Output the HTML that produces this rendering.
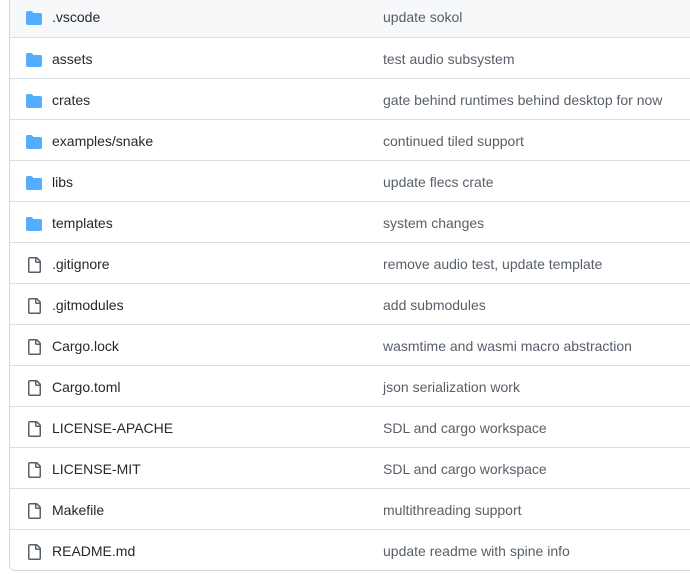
<!DOCTYPE html>
<html><head><meta charset="utf-8"><style>
html,body{margin:0;padding:0;background:#fff;width:690px;height:574px;overflow:hidden}
.box{position:absolute;left:9px;top:-5px;width:720px;height:576px;border:1px solid #d0d7de;border-radius:6px;box-sizing:border-box;overflow:hidden}
.row{position:absolute;left:0;width:100%;height:41px;border-top:1px solid #d8dee4;box-sizing:border-box;font-family:"Liberation Sans",sans-serif;font-size:14px}
.row.first{border-top:none;background:#f6f8fa}
.ic{position:absolute;left:16px;top:14px}
.n{position:absolute;left:42px;top:13px;color:#24292f}
.m{position:absolute;left:373px;top:13px;color:#57606a}
</style></head><body>
<div class="box" id="b"></div>
<script>
var rows=[["d",".vscode","update sokol"],["d","assets","test audio subsystem"],["d","crates","gate behind runtimes behind desktop for now"],["d","examples/snake","continued tiled support"],["d","libs","update flecs crate"],["d","templates","system changes"],["f",".gitignore","remove audio test, update template"],["f",".gitmodules","add submodules"],["f","Cargo.lock","wasmtime and wasmi macro abstraction"],["f","Cargo.toml","json serialization work"],["f","LICENSE-APACHE","SDL and cargo workspace"],["f","LICENSE-MIT","SDL and cargo workspace"],["f","Makefile","multithreading support"],["f","README.md","update readme with spine info"]];
var fold='<svg class="ic" width="16" height="16" viewBox="0 0 16 16"><path fill="#54aeff" d="M1.75 1A1.75 1.75 0 000 2.75v10.5C0 14.22.78 15 1.75 15h12.5A1.75 1.75 0 0016 13.25v-8.5A1.75 1.75 0 0014.25 3H7.5a.25.25 0 01-.2-.1l-.9-1.2C6.070 1.26 5.55 1 5 1H1.75z"/></svg>';
var file='<svg class="ic" width="16" height="16" viewBox="0 0 16 16"><path fill="#57606a" d="M2 1.75C2 .784 2.784 0 3.75 0h6.586c.464 0 .909.184 1.237.513l2.914 2.914c.329.328.513.773.513 1.237v9.586A1.75 1.75 0 0113.25 16h-9.5A1.75 1.75 0 012 14.25V1.75zm1.75-.25a.25.25 0 00-.25.25v12.5c0 .138.112.25.25.25h9.5a.25.25 0 00.25-.25V6h-2.750A1.75 1.75 0 019 4.25V1.5H3.75zm6.75.062V4.25c0 .138.112.25.25.25h2.688a.252.252 0 00-.011-.013L10.513 1.573a.248.248 0 00-.013-.011z"/></svg>';
var h='';
rows.forEach(function(r,i){h+='<div class="row'+(i==0?' first':'')+'" style="top:'+(41*i)+'px">'+(r[0]=="d"?fold:file)+'<span class="n">'+r[1]+'</span><span class="m">'+r[2]+'</span></div>';});
document.getElementById('b').innerHTML=h;
</script>
</body></html>
